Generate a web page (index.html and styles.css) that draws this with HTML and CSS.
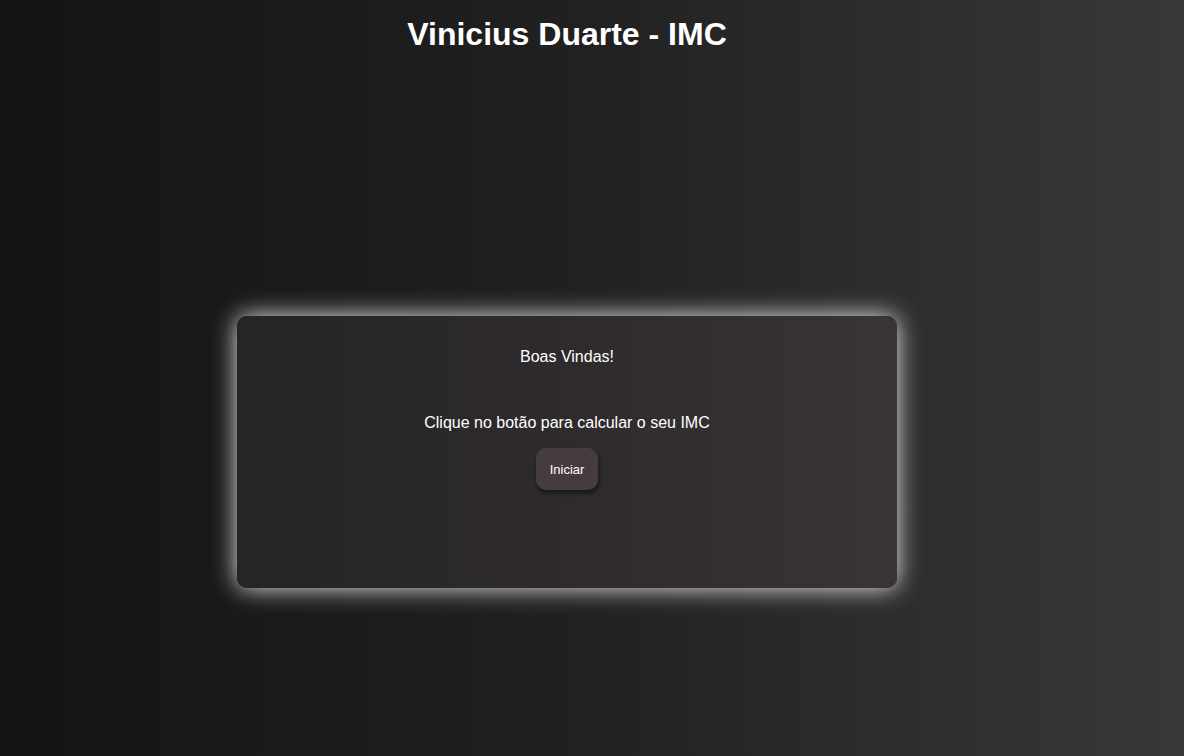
FILE: index.html
```html
<!DOCTYPE html>
<html lang="pt-BR">
<head>
<meta charset="utf-8">
<title>Vinicius Duarte - IMC</title>
<link rel="stylesheet" href="styles.css">
</head>
<body>
<div class="page">
  <h1 class="title">Vinicius Duarte - IMC</h1>
  <main class="card">
    <p class="welcome">Boas Vindas!</p>
    <p class="hint">Clique no botão para calcular o seu IMC</p>
    <button class="start">Iniciar</button>
  </main>
</div>
</body>
</html>
```

FILE: styles.css
```css
html, body {
  margin: 0;
  height: 100%;
}
body {
  background: linear-gradient(to right, #141414 0%, #222121 50%, #3a3837 100%);
  font-family: "Liberation Sans", Arial, sans-serif;
  color: #ffffff;
  overflow: hidden;
}
.page {
  width: 1134px;
  display: flex;
  flex-direction: column;
  align-items: center;
}
.title {
  margin: 16px 0 0;
  font-size: 32px;
  font-weight: bold;
  line-height: 37px;
}
.card {
  margin-top: 263px;
  width: 660px;
  height: 272px;
  box-sizing: border-box;
  border-radius: 10px;
  background: linear-gradient(to right, #262425 0%, #2f2b2d 50%, #393436 100%);
  box-shadow: 0 0 24px rgba(255, 255, 255, 0.9);
  display: flex;
  flex-direction: column;
  align-items: center;
  padding-top: 31px;
}
.welcome {
  margin: 0;
  font-size: 16px;
  line-height: 20px;
}
.hint {
  margin: 46px 0 0;
  font-size: 16px;
  line-height: 20px;
}
.start {
  margin-top: 15px;
  width: 62px;
  height: 42px;
  border: none;
  border-radius: 10px;
  background: #463b41;
  color: #ffffff;
  font-family: "Liberation Sans", Arial, sans-serif;
  font-size: 13px;
  font-weight: normal;
  box-shadow: 1px 3px 5px rgba(0, 0, 0, 0.55);
  cursor: pointer;
}
```
